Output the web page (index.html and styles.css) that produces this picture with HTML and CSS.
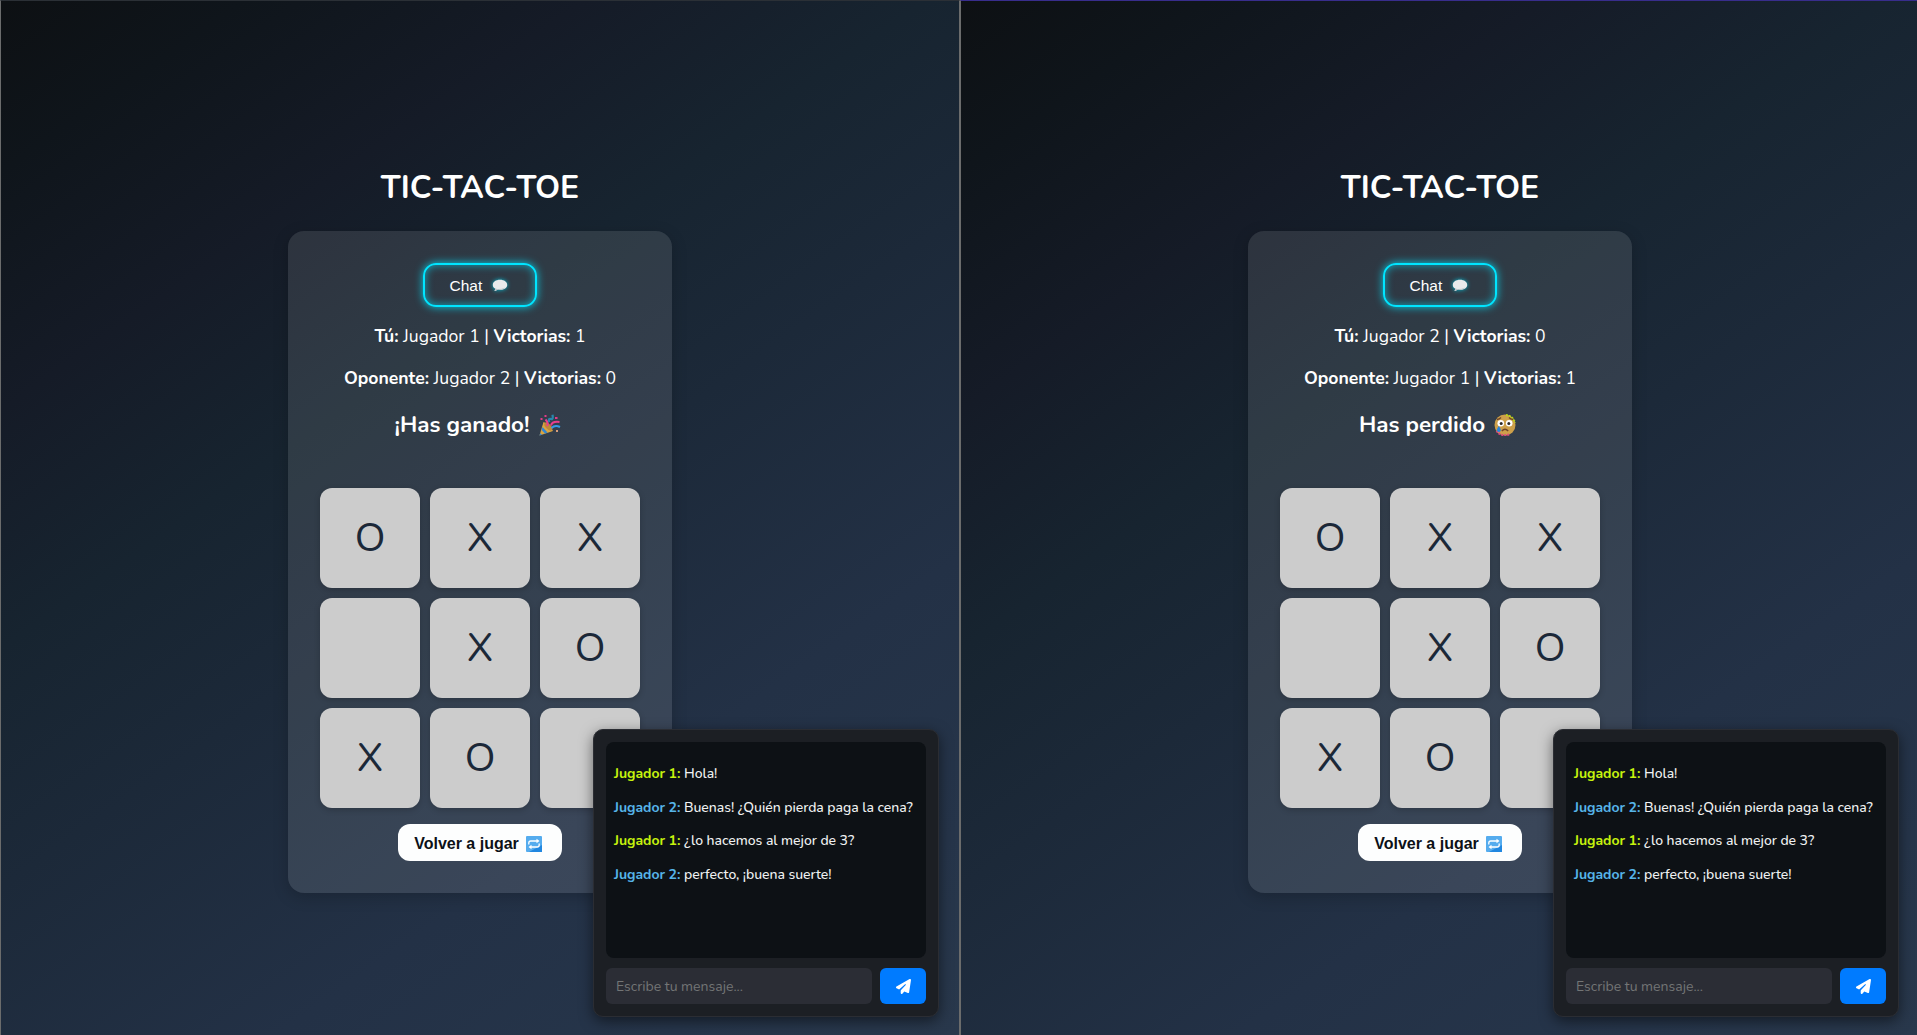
FILE: index.html
```
<!DOCTYPE html>
<html lang="es">
<head>
<meta charset="utf-8">
<title>Tic-Tac-Toe</title>
<link rel="stylesheet" href="styles.css">
</head>
<body>
<svg class="defs" aria-hidden="true">
  <symbol id="bubble" viewBox="0 0 16 13"><path d="M8 .8C12.200 .8 15.200 3 15.200 5.900S12.200 10.800 8.200 10.800L5.800 10.600C4.800 11.600 3.500 12 2.500 11.900L3.400 9.700C1.700 8.800 .8 7.500 .8 5.900.8 3 3.800.8 8 .8Z" fill="#e9eaeb"/><path d="M3.500 9.600Q8 11 13 8.500L11 10.300 8.200 10.800 5.800 10.600 2.500 11.900Z" fill="#bfc3c7"/></symbol>
  <symbol id="plane" viewBox="0 0 512 512"><path fill="#fff" d="M498 6c11 7 16 19 14 32l-64 416c-2 10-8 18-16 23s-19 6-28 2l-120-50-68 74c-9 10-23 13-35 8s-21-17-21-30v-84c0-4 2-8 4-11l168-183c6-6 6-16 0-22s-15-6-22-1L106 361l-88-44C7 312 0 301 0 289s6-22 16-29L464 4c11-6 24-5 34 2z"/></symbol>
  <symbol id="repeat" viewBox="0 0 16 16"><rect width="16" height="16" rx="1" fill="#55acee"/><path d="M3 16L16 9V16Z" fill="#2187e0"/><path d="M2.800 8.500V7Q2.800 5 4.800 5H11M13.200 7.500V9Q13.200 11 11.200 11H5" fill="none" stroke="#fff" stroke-width="1.300"/><path d="M10.500 2.800L13.500 5 10.500 7.200ZM5.500 8.800L2.500 11 5.500 13.200Z" fill="#fff"/></symbol>
  <symbol id="party" viewBox="0 0 22 22"><path d="M.5 21.500L4.500 8Q10.500 10 14 17Z" fill="#d9a441"/><path d="M3.500 13L8.500 18.600 6 19.600 2.600 16Z" fill="#2f86d6"/><path d="M1.200 19.300L3 20.700.5 21.500Z" fill="#2f86d6"/><ellipse cx="9.300" cy="12.500" rx="5" ry="2.600" transform="rotate(46 9.300 12.500)" fill="#bd873a"/><path d="M8 12Q10 9 6.500 5.500M12 11.500Q13 7 20.500 8" fill="none" stroke="#e83e8c" stroke-width="2"/><path d="M10.500 8Q8.500 4.500 12 5 14.500 6 13.500.8" fill="none" stroke="#2788ad" stroke-width="2.200"/><path d="M12.500 14Q16 10.500 21 13" fill="none" stroke="#359be8" stroke-width="2"/><path d="M5.500 1h2v2h-2zM1.500 4h2v2h-2zM16 3h2.500v2H16z" fill="#e23c87"/><path d="M17 16h2v2h-2z" fill="#d79d7a"/></symbol>
  <symbol id="sad" viewBox="0 0 22 22"><circle cx="11" cy="11" r="10.500" fill="#cda04a"/><path d="M12 1A10.500 10.500 0 0 1 21 9" fill="none" stroke="#b9d816" stroke-width="2" stroke-dasharray="2 1"/><path d="M2.500 17A10.500 10.500 0 0 0 15 20.500" fill="none" stroke="#dc477d" stroke-width="2" stroke-dasharray="2 1"/><circle cx="6.800" cy="9.300" r="3.300" fill="#fff"/><circle cx="15.200" cy="9.300" r="3.300" fill="#fff"/><circle cx="7.200" cy="9.600" r="1.500" fill="#2d2926"/><circle cx="14.800" cy="9.600" r="1.500" fill="#2d2926"/><path d="M3 5.500Q5.500 5.300 7 3.500M15 3.500Q16.500 5.300 19 5.500M7.800 17Q11 13.500 14.200 17" fill="none" stroke="#70452a" stroke-width="1.300"/><path d="M4.800 12Q7.500 15.500 6.500 17.200 4.500 19 3.100 16.800 2.500 15.300 4.800 12Z" fill="#2583df"/></symbol>
</svg>
<div class="screens">
  <main class="screen">
    <h1>TIC-TAC-TOE</h1>
    <section class="panel">
      <button class="chat-toggle"><span>Chat</span><svg class="bubble"><use href="#bubble"/></svg></button>
      <p class="score own"><b>Tú:</b> Jugador 1 | <b>Victorias:</b> 1</p>
      <p class="score"><b>Oponente:</b> Jugador 2 | <b>Victorias:</b> 0</p>
      <h2><span>¡Has ganado!</span><svg><use href="#party"/></svg></h2>
      <div class="board"><i>O</i><i>X</i><i>X</i><i></i><i>X</i><i>O</i><i>X</i><i>O</i><i></i></div>
      <button class="again"><span>Volver a jugar</span><svg><use href="#repeat"/></svg></button>
    </section>
    <aside class="chat">
      <div class="messages">
        <p><b class="p1">Jugador 1:</b> <span>Hola!</span></p>
        <p><b class="p2">Jugador 2:</b> <span>Buenas! ¿Quién pierda paga la cena?</span></p>
        <p><b class="p1">Jugador 1:</b> <span>¿lo hacemos al mejor de 3?</span></p>
        <p><b class="p2">Jugador 2:</b> <span>perfecto, ¡buena suerte!</span></p>
      </div>
      <div class="compose"><input placeholder="Escribe tu mensaje..."><button aria-label="Enviar"><svg><use href="#plane"/></svg></button></div>
    </aside>
  </main>
  <main class="screen second">
    <h1>TIC-TAC-TOE</h1>
    <section class="panel">
      <button class="chat-toggle"><span>Chat</span><svg class="bubble"><use href="#bubble"/></svg></button>
      <p class="score own"><b>Tú:</b> Jugador 2 | <b>Victorias:</b> 0</p>
      <p class="score"><b>Oponente:</b> Jugador 1 | <b>Victorias:</b> 1</p>
      <h2><span>Has perdido</span><svg><use href="#sad"/></svg></h2>
      <div class="board"><i>O</i><i>X</i><i>X</i><i></i><i>X</i><i>O</i><i>X</i><i>O</i><i></i></div>
      <button class="again"><span>Volver a jugar</span><svg><use href="#repeat"/></svg></button>
    </section>
    <aside class="chat">
      <div class="messages">
        <p><b class="p1">Jugador 1:</b> <span>Hola!</span></p>
        <p><b class="p2">Jugador 2:</b> <span>Buenas! ¿Quién pierda paga la cena?</span></p>
        <p><b class="p1">Jugador 1:</b> <span>¿lo hacemos al mejor de 3?</span></p>
        <p><b class="p2">Jugador 2:</b> <span>perfecto, ¡buena suerte!</span></p>
      </div>
      <div class="compose"><input placeholder="Escribe tu mensaje..."><button aria-label="Enviar"><svg><use href="#plane"/></svg></button></div>
    </aside>
  </main>
</div>
</body>
</html>
```
FILE: styles.css
```
* { box-sizing: border-box; }
body { margin: 0; overflow: hidden; background: #0d1117; font-family: Nunito, Lato, sans-serif; color: #fff; }
.defs { display: none; }
svg { display: block; flex: none; }
p, h1, h2 { margin: 0; white-space: nowrap; }
button { border: 0; padding: 0; font-family: "Liberation Sans", Arial, sans-serif; }

.screens { display: grid; grid-template-columns: 960px 960px; height: 1035px; }
.screen {
  position: relative;
  display: flex; flex-direction: column; align-items: center;
  height: 1035px; padding-top: 165px;
  border: solid #6b6c6c; border-width: 1px 1px 0; border-top-color: #2b3036;
  background: linear-gradient(145deg, #0d1013, #0f151b 10%, #151b27 24%, #172430 38%, #1c2939 52%, #233146 72%, #26354a 88%, #29384c);
}
.second { border-top-color: #382d8c; }
h1 { height: 65px; font-size: 32px; line-height: 44px; font-weight: 700; }

.panel {
  display: flex; flex-direction: column; align-items: center;
  width: 384px; height: 662px; padding: 32px; border-radius: 16px;
  background: rgba(255, 255, 255, .105);
  box-shadow: 0 4px 16px rgba(0, 0, 0, .2);
}
.chat-toggle {
  display: flex; align-items: center; gap: 10px;
  width: 114px; height: 44px; padding: 1px 0 0 24.500px;
  border: 2px solid #00e5ff; border-radius: 13px;
  background: transparent; color: #fff; font-size: 15.500px;
  box-shadow: 0 0 8px rgba(0, 229, 255, .85), inset 0 0 8px rgba(0, 229, 255, .65);
}
.bubble { width: 16px; height: 13px; filter: drop-shadow(0 0 2px #00bcd4); }
.score { height: 42px; font-size: 17.600px; line-height: 24px; }
.own { margin-top: 17px; }
h2 { display: flex; align-items: center; gap: 9px; height: 30px; margin-top: 2px; padding-right: 5px; font-size: 22.400px; line-height: 30px; }
h2 svg { width: 22px; height: 22px; }

.board { display: grid; grid-template-columns: repeat(3, 100px); grid-auto-rows: 100px; gap: 10px; margin-top: 48px; }
.board i {
  display: grid; place-items: center; border-radius: 12px;
  background: #ccc; color: #1b2838; font-style: normal; font-size: 40px;
  box-shadow: 0 2px 6px rgba(0, 0, 0, .2);
}
.again {
  display: flex; align-items: center; justify-content: center; gap: 7px;
  width: 164px; height: 37px; margin-top: 16px; padding: 2px 4px 0 0; border-radius: 12px;
  background: #fdfefe; color: #0d1117; font-size: 16px; font-weight: 700; white-space: nowrap;
}
.again svg { width: 16px; height: 16px; }

.chat {
  position: absolute; right: 20px; bottom: 18px;
  display: flex; flex-direction: column; gap: 10px;
  width: 346px; height: 288px; padding: 12px;
  border: 1px solid #2b2d33; border-radius: 10px; background: #1c1f24;
  box-shadow: 0 4px 14px rgba(0, 0, 0, .5);
}
.messages { height: 216px; padding: 22px 8px 0; border-radius: 8px; background: #0d1115; font-size: 14px; font-weight: 500; letter-spacing: -.04px; color: #f0f1f2; }
.messages p { height: 33.700px; line-height: 20px; }
.messages b { font-weight: 700; }
.p1 { color: #c6f20d; }
.p2 { color: #56b4e8; }
.compose { display: flex; gap: 8px; }
.compose input {
  width: 266px; height: 36px; padding: 0 10px; border: 0; border-radius: 6px;
  background: #2b2d35; color: #fff; font: 14px Nunito, Lato, sans-serif;
}
.compose input::placeholder { color: #737575; }
.compose button { display: grid; place-items: center; width: 46px; height: 36px; border-radius: 6px; background: #007bff; }
.compose svg { width: 15px; height: 15px; }
```
